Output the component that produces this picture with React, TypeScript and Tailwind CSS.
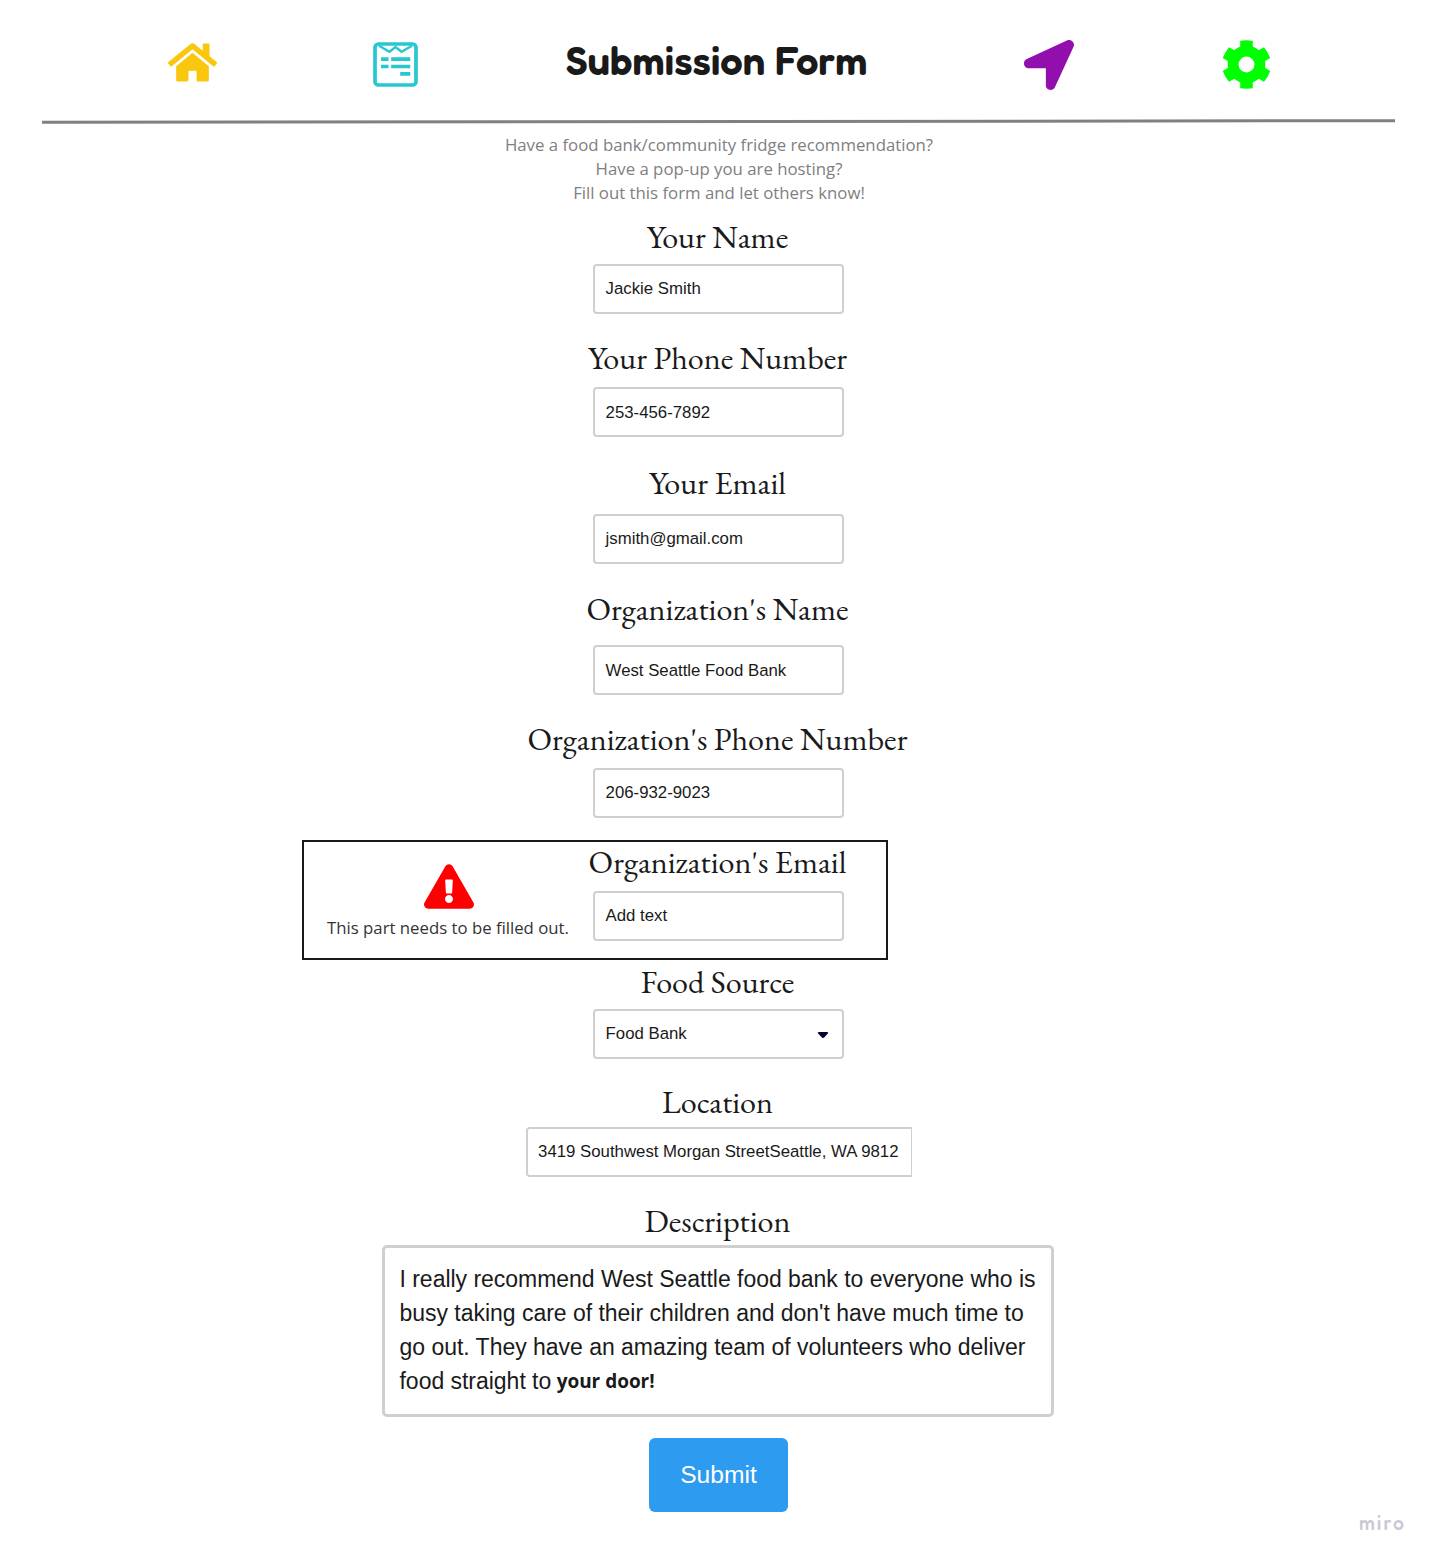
import type { ReactNode } from "react";
import { FaExclamationTriangle, FaHome, FaLocationArrow } from "react-icons/fa";

const arial = "font-['Liberation_Sans',Arial,sans-serif]";

function FormIcon() {
  return (
    <svg viewBox="0 0 134 134" className="h-[45px] w-[45px] text-[#27c7cf]" fill="none" stroke="currentColor">
      <rect x="6" y="6" width="122" height="122" rx="10" strokeWidth="11" />
      <path d="M18 11 L49 29 L67 15 L85 29 L116 11" strokeWidth="7" />
      <path d="M24 51H46M54 51H111M24 73H46M54 73H111M81 95H111" strokeWidth="11" />
    </svg>
  );
}

function GearIcon() {
  const tooth = "M-19 -50V-72Q0 -75 19 -72V-50ZM-19 50V72Q0 75 19 72V50Z";
  return (
    <svg viewBox="-74 -74 148 148" className="h-[49px] w-[49px] text-[#00ff00]" fill="currentColor">
      <path
        fillRule="evenodd"
        d="M-57 0A57 57 0 1 1 57 0A57 57 0 1 1 -57 0ZM-24 0A24 24 0 1 0 24 0A24 24 0 1 0 -24 0Z"
      />
      <path d={tooth} />
      <path d={tooth} transform="rotate(60)" />
      <path d={tooth} transform="rotate(120)" />
    </svg>
  );
}

function Label({ children, className = "" }: { children: ReactNode; className?: string }) {
  return (
    <div
      className={`-ml-[2px] h-9 whitespace-nowrap text-center font-['EB_Garamond','Liberation_Serif',serif] text-[32.2px] leading-9 text-[#1a1a1a] ${className}`}
    >
      {children}
    </div>
  );
}

function Box({ children, className = "" }: { children: ReactNode; className?: string }) {
  return (
    <div
      className={`flex h-[50px] w-[251px] shrink-0 items-center justify-between whitespace-nowrap rounded-[4px] border-2 border-[#cfcfcf] bg-white pl-[10.6px] text-[16.8px] text-[#1a1a1a] ${arial} ${className}`}
    >
      {children}
    </div>
  );
}

export default function App() {
  return (
    <div className="flex h-[1564px] w-[1437px] flex-col items-center overflow-hidden bg-white">
      <header className="flex h-[120px] w-full shrink-0 items-start">
        <FaHome className="ml-[168px] mt-[40px] h-[45px] w-[49px] text-[#f9c80e]" />
        <div className="ml-[156px] mt-[42px]">
          <FormIcon />
        </div>
        <h1 className="ml-[147px] mt-[35px] w-[303px] whitespace-nowrap text-center font-['Fredoka_One','Fredoka','Lato',sans-serif] text-[40px] font-[650] leading-[50px] text-[#1a1a1a]">
          Submission Form
        </h1>
        <FaLocationArrow className="ml-[156px] mt-[40px] h-[50px] w-[50px] text-[#920fae]" />
        <div className="ml-[147.5px] mt-[40px]">
          <GearIcon />
        </div>
      </header>
      <div className="h-[3px] w-[1353px] shrink-0 rotate-[-0.07deg] bg-[#808080]" />

      <p className="ml-px mt-[10px] text-center font-['Open_Sans',sans-serif] text-[16.8px] leading-6 text-[#808080]">
        Have a food bank/community fridge recommendation?
        <br />
        Have a pop-up you are hosting?
        <br />
        Fill out this form and let others know!
      </p>

      <Label className="mt-[14px]">Your Name</Label>
      <Box className="mt-[9px]">Jackie Smith</Box>

      <Label className="mt-[26px]">Your Phone Number</Label>
      <Box className="mt-[11px] pt-px">253-456-7892</Box>

      <Label className="mt-7">Your Email</Label>
      <Box className="mt-[13px]">jsmith@gmail.com</Box>

      <Label className="mt-[27px]">Organization's Name</Label>
      <Box className="mt-[18px] pt-px">West Seattle Food Bank</Box>

      <Label className="mt-[26px]">Organization's Phone Number</Label>
      <Box className="mt-[11px]">206-932-9023</Box>

      <section className="ml-[302px] mt-[22px] flex h-[120px] w-[586px] shrink-0 self-start border-2 border-[#1a1a1a]">
        <div className="flex w-[289px] shrink-0 flex-col items-center pt-[21px]">
          <FaExclamationTriangle className="ml-px h-[47px] w-[50px] text-[#ff0000]" />
          <p className="mr-px mt-[6px] whitespace-nowrap font-['Open_Sans',sans-serif] text-[16.75px] leading-6 text-[#333333]">
            This part needs to be filled out.
          </p>
        </div>
        <div className="flex w-[251px] shrink-0 flex-col items-center pt-[2px]">
          <Label>Organization's Email</Label>
          <Box className="mt-[11px]">Add text</Box>
        </div>
      </section>

      <Label className="mt-[4px]">Food Source</Label>
      <Box className="mt-[9px] pr-[13px]">
        <span>Food Bank</span>
        <svg viewBox="0 0 12 8" className="mt-px h-[8px] w-[12px]" fill="#050038">
          <path d="M2 1H10Q12 1 10.8 2.6L7.4 6.3Q6 7.5 4.6 6.3L1.2 2.6Q0 1 2 1Z" />
        </svg>
      </Box>

      <Label className="mt-[25px]">Location</Label>
      <Box className="mt-[7px] w-[386px]! rounded-r-none border-r">
        3419 Southwest Morgan StreetSeattle, WA 9812
      </Box>

      <Label className="mt-[26px]">Description</Label>
      <div
        className={`mr-px mt-[6px] h-[172px] w-[672px] shrink-0 whitespace-nowrap rounded-[5px] border-3 border-[#cfcfcf] pl-[14.5px] pt-[13.5px] text-[23px] leading-[34.3px] tracking-[-0.025px] text-[#1a1a1a] ${arial}`}
      >
        I really recommend West Seattle food bank to everyone who is
        <br />
        busy taking care of their children and don't have much time to
        <br />
        go out. They have an amazing team of volunteers who deliver
        <br />
        food straight to{" "}
        <b className="relative -left-px -top-px font-['Open_Sans','Noto_Sans',sans-serif] text-[19px] font-[660] leading-none">
          your door!
        </b>
      </div>

      <button
        className={`mt-[21px] h-[74px] w-[139px] shrink-0 rounded-[6px] bg-[#2d9bf0] text-[24.6px] text-white ${arial}`}
      >
        Submit
      </button>

      <footer className="-mt-px mr-[31px] self-end font-['Fredoka_One','Fredoka','Noto_Sans',sans-serif] text-[19.5px] font-medium leading-6 tracking-[2px] text-[#c9c9d3]">
        miro
      </footer>
    </div>
  );
}
